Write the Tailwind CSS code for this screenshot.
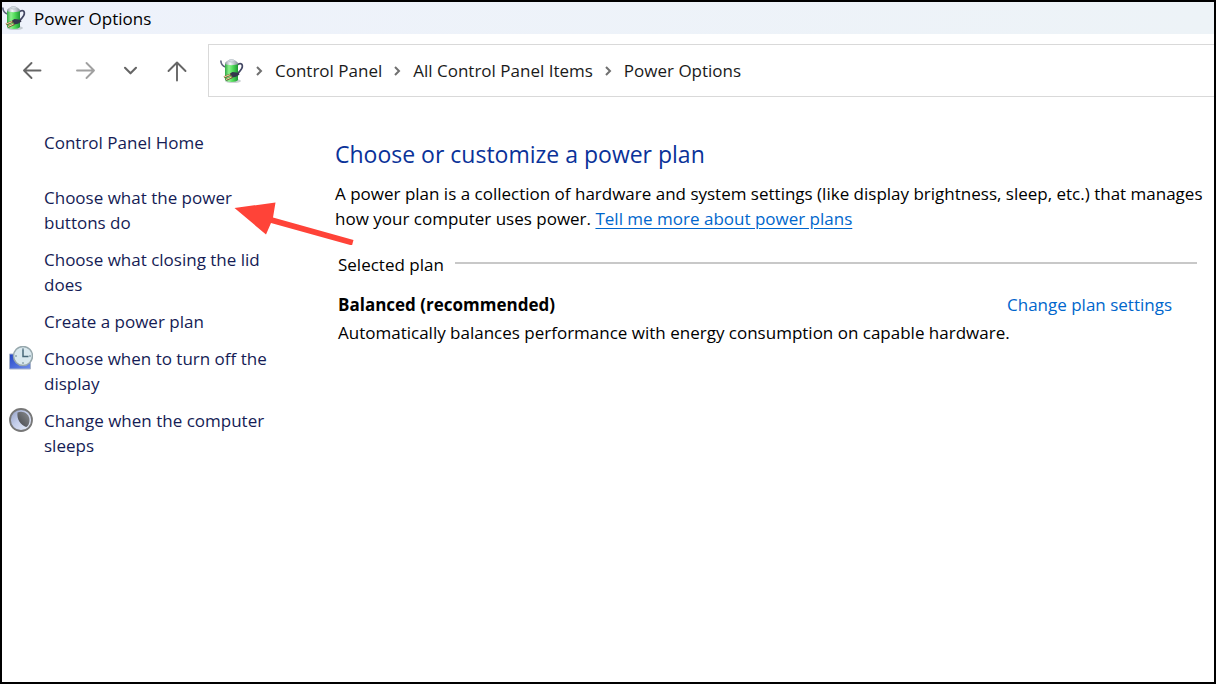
<!DOCTYPE html>
<html lang="en">
<head>
    <meta charset="UTF-8">
    <meta name="viewport" content="width=device-width, initial-scale=1.0">
    <title>Power Options</title>
    <script src="https://cdn.jsdelivr.net/npm/@tailwindcss/browser@4"></script>
</head>
<body class="min-h-screen flex flex-col border-2 border-black bg-white font-['Open_Sans',sans-serif] text-[17px] leading-[25px] text-black">

    <!-- battery icon, used in the title bar and the address bar -->
    <svg class="absolute size-0" aria-hidden="true">
        <defs>
            <linearGradient id="green" x1="0" x2="1">
                <stop offset="0" stop-color="#2fa844"/>
                <stop offset=".3" stop-color="#8df08d"/>
                <stop offset=".6" stop-color="#4fdc58"/>
                <stop offset="1" stop-color="#1f9434"/>
            </linearGradient>
            <linearGradient id="cap" x1="0" x2="1">
                <stop offset="0" stop-color="#8c97a0"/>
                <stop offset=".4" stop-color="#f4f8fa"/>
                <stop offset="1" stop-color="#84909a"/>
            </linearGradient>
        </defs>
        <symbol id="battery" viewBox="0 0 24 24">
            <ellipse cx="13" cy="22" rx="8" ry="2" fill="#9aa3a8" opacity=".5"/>
            <path d="M0.8 1.5C1 5 2 7 5.5 8" fill="none" stroke="#596079" stroke-width="1.6"/>
            <path d="M17 6C20 3.500 22.800 4.500 22.300 8C21.800 11 19.500 12 18 14.500" fill="none" stroke="#434763" stroke-width="1.7"/>
            <path d="M5 4.500V21C6 23.500 17 23.500 18 21V4.500Z" fill="url(#green)"/>
            <path d="M5 5C5 2.500 8 1 11.500 1S18 2.500 18 5C16 6.500 7 6.500 5 5Z" fill="url(#cap)"/>
            <ellipse cx="11.5" cy="1.8" rx="3" ry="1.300" fill="#d5dde2" stroke="#9aa6af" stroke-width=".5"/>
            <path d="M10 14.500L12.500 13L18.500 13.800L19.500 15.500L16 17.800L12.500 18.500Z" fill="#34364c"/>
            <path d="M11 15.500L4 18.300M12.500 18L6 20.800" stroke="#6e5a35" stroke-width="2"/>
            <path d="M10 15.700L4 18M11.500 18.200L6 20.500" stroke="#f0d9a0" stroke-width="1"/>
        </symbol>
    </svg>

    <header class="flex h-8 items-center gap-2 bg-linear-to-r from-[#eef2fb] to-[#edf3f7]">
        <svg class="size-6"><use href="#battery"/></svg>
        <span>Power Options</span>
    </header>

    <nav class="mt-[10px] flex items-stretch" aria-label="Navigation">
        <div class="flex w-[206px] shrink-0 items-center gap-6 pl-[18px] text-[#666]">
            <button type="button" aria-label="Back">
                <svg class="size-6" viewBox="0 0 24 24" fill="none" stroke="currentColor" stroke-width="1.9" stroke-linecap="round" stroke-linejoin="round"><path d="M20.5 11.500H4M11.500 4L4 11.500L11.500 19"/></svg>
            </button>
            <button type="button" aria-label="Forward" class="ml-[5px] text-[#a0a0a0]" disabled>
                <svg class="size-6" viewBox="0 0 24 24" fill="none" stroke="currentColor" stroke-width="1.9" stroke-linecap="round" stroke-linejoin="round"><path d="M4 11.500H21M13.500 4L21 11.500L13.500 19"/></svg>
            </button>
            <button type="button" aria-label="Recent locations" class="-ml-1">
                <svg class="size-6" viewBox="0 0 24 24" fill="none" stroke="currentColor" stroke-width="2.1" stroke-linecap="round" stroke-linejoin="round"><path d="M8 8.800L13.500 14.300L19 8.800"/></svg>
            </button>
            <button type="button" aria-label="Up">
                <svg class="size-6" viewBox="0 0 24 24" fill="none" stroke="currentColor" stroke-width="1.9" stroke-linecap="round" stroke-linejoin="round"><path d="M12 21.500V3.500M3.500 12L12 3.500L20.500 12"/></svg>
            </button>
        </div>
        <ol class="flex h-[53px] grow items-center border border-r-0 border-[#d9d9d9] pl-[11px] text-[#1a1a1a]">
            <li><svg class="size-6"><use href="#battery"/></svg></li>
            <li class="flex items-center"><svg class="mx-[9px] h-3 w-[13px]" viewBox="0 0 13 12" fill="none" stroke="#707070" stroke-width="2"><path d="M4 2L8 6L4 10"/></svg><a href="#">Control Panel</a></li>
            <li class="flex items-center"><svg class="mx-[9px] h-3 w-[13px]" viewBox="0 0 13 12" fill="none" stroke="#707070" stroke-width="2"><path d="M4 2L8 6L4 10"/></svg><a href="#">All Control Panel Items</a></li>
            <li class="flex items-center"><svg class="mx-[9px] h-3 w-[13px]" viewBox="0 0 13 12" fill="none" stroke="#707070" stroke-width="2"><path d="M4 2L8 6L4 10"/></svg><a href="#">Power Options</a></li>
        </ol>
    </nav>

    <div class="flex grow pt-[33px]">
        <aside class="w-[333px] shrink-0 pl-[42px] pr-14 text-[#151c55]">
            <a href="#">Control Panel Home</a>
            <ul class="mt-[30px] flex flex-col gap-3">
                <li class="relative">
                    <a href="#">Choose what the power<br>buttons do</a>
                    <!-- red pointer -->
                    <svg class="pointer-events-none absolute left-[190px] top-4 h-11 w-[120px]" viewBox="0 0 120 44" fill="#ff4338"><path d="M0.500 7L41.500 1.500L39 16.500L119.500 39L118 44.500L37 22L32 33.500Z"/></svg>
                </li>
                <li><a href="#">Choose what closing the lid<br>does</a></li>
                <li><a href="#">Create a power plan</a></li>
                <li class="-ml-[35px] flex gap-[11px]">
                    <svg class="size-6 shrink-0" viewBox="0 0 24 24">
                        <defs>
                            <linearGradient id="screen" x1="0" y1="0" x2="1" y2="1"><stop offset="0" stop-color="#2446c8"/><stop offset="1" stop-color="#6f8eea"/></linearGradient>
                        </defs>
                        <path d="M.5 8H21.500V23H.5Z" fill="url(#screen)" stroke="#a8b4cc"/>
                        <circle cx="14" cy="10" r="9.500" fill="#d9e8ee" stroke="#97a8ad" stroke-width="1.5"/>
                        <path d="M14 2V4M14 16V18M6 10H8M20 10H22" stroke="#6c8692"/>
                        <path d="M14 3.500V10.500H19.500" fill="none" stroke="#486878" stroke-width="1.5"/>
                    </svg>
                    <a href="#">Choose when to turn off the<br>display</a>
                </li>
                <li class="-ml-[35px] flex gap-[11px]">
                    <svg class="size-6 shrink-0" viewBox="0 0 24 24">
                        <defs>
                            <linearGradient id="moon" x1="0" y1="0" x2="1" y2="1"><stop offset="0" stop-color="#8f9bc0"/><stop offset=".45" stop-color="#c3cdea"/><stop offset="1" stop-color="#eef2fb"/></linearGradient>
                            <linearGradient id="shade" x1="1" y1="0" x2="0" y2="1"><stop offset="0" stop-color="#8a8c90"/><stop offset="1" stop-color="#43454a"/></linearGradient>
                        </defs>
                        <circle cx="12" cy="12" r="11" fill="url(#moon)" stroke="#777" stroke-width="1.8"/>
                        <path d="M8.500 4.500C14 2 20.500 6 20.500 12C20.500 15.500 19 18.500 17 19C11.500 17 7.500 11 8.500 4.500Z" fill="url(#shade)"/>
                    </svg>
                    <a href="#">Change when the computer<br>sleeps</a>
                </li>
            </ul>
        </aside>

        <main class="min-w-0 grow pt-2">
            <h1 class="text-[23px] leading-8 text-[#0a3299]">Choose or customize a power plan</h1>
            <p class="mt-[11px]">A power plan is a collection of hardware and system settings (like display brightness, sleep, etc.) that manages<br>how your computer uses power. <a href="#" class="text-[#0066cc] underline underline-offset-3">Tell me more about power plans</a></p>

            <section class="pl-[3px] pr-[17px]">
                <div class="mt-[21px] flex items-start gap-[11px]">
                    <h2>Selected plan</h2>
                    <div class="mt-[10px] h-[2px] grow bg-[#c8c8c8]"></div>
                </div>
                <div class="mt-[15px] flex justify-between pr-[25px]">
                    <h3 class="font-bold">Balanced (recommended)</h3>
                    <a href="#" class="text-[#0066cc]">Change plan settings</a>
                </div>
                <p class="mt-[3px]">Automatically balances performance with energy consumption on capable hardware.</p>
            </section>
        </main>
    </div>

</body>
</html>
